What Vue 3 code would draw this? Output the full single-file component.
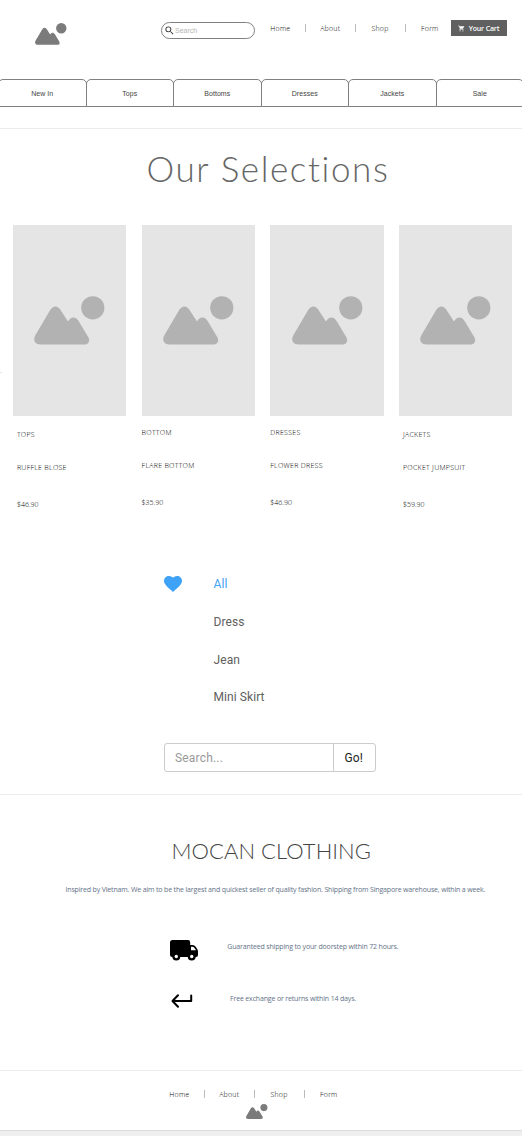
<script setup>
import { h } from 'vue'

const links = ['Home', 'About', 'Shop', 'Form']
const tabs = ['New In', 'Tops', 'Bottoms', 'Dresses', 'Jackets', 'Sale']
const products = [
  { category: 'TOPS', name: 'RUFFLE BLOSE', price: '$46.90', inset: true },
  { category: 'BOTTOM', name: 'FLARE BOTTOM', price: '$35.90', inset: false },
  { category: 'DRESSES', name: 'FLOWER DRESS', price: '$46.90', inset: false },
  { category: 'JACKETS', name: 'POCKET JUMPSUIT', price: '$59.90', inset: true },
]
const filters = ['All', 'Dress', 'Jean', 'Mini Skirt']

const Mark = () =>
  h('svg', { viewBox: '0 0 70.5 49', preserveAspectRatio: 'none', fill: 'currentColor' }, [
    h('circle', { cx: 58.8, cy: 11.8, r: 11.6 }),
    h('path', {
      d: 'M6.5 48.6C.8 48.6-1.2 44 1.2 39.6L15.6 15C18.8 8.9 24 8.9 27.2 15L34 25.4C36.8 20.4 41.6 20.2 44.6 25L54.2 41C56.6 45 54.6 48.6 50 48.6Z',
    }),
  ])
</script>

<template>
  <div class="page">
    <header class="header">
      <Mark class="logo" />
      <label class="pill">
        <svg viewBox="0 0 24 24" fill="#333"><path d="M15.5 14h-.79l-.28-.27A6.47 6.47 0 0 0 16 9.5 6.5 6.5 0 1 0 9.5 16c1.61 0 3.09-.59 4.23-1.57l.27.28v.79l5 4.99L20.49 19l-4.99-5zm-6 0a4.5 4.5 0 1 1 0-9 4.5 4.5 0 0 1 0 9z" /></svg>
        <span>Search</span>
      </label>
      <nav class="links">
        <a v-for="l in links" :key="l">{{ l }}</a>
      </nav>
      <button class="cart">
        <svg viewBox="0 0 24 24" fill="#fff"><path d="M7 18a2 2 0 1 0 0 4 2 2 0 0 0 0-4zM1 2v2h2l3.6 7.59-1.35 2.45C4.52 15.37 5.48 17 7 17h12v-2H7.42l-.03-.37.9-1.63h7.45c.75 0 1.41-.41 1.75-1.03L21.7 4H5.21l-.94-2H1zm16 16a2 2 0 1 0 0 4 2 2 0 0 0 0-4z" /></svg>
        <span>Your Cart</span>
      </button>
    </header>

    <div class="tabs">
      <div v-for="t in tabs" :key="t" class="tab">{{ t }}</div>
    </div>

    <section class="selections">
      <h1>Our Selections</h1>
      <i class="tick"></i>
      <div class="cards">
        <article v-for="p in products" :key="p.category">
          <div class="photo"><Mark class="mark" /></div>
          <div class="info" :class="{ inset: p.inset }">
            <p class="cat">{{ p.category }}</p>
            <p class="name">{{ p.name }}</p>
            <p class="price">{{ p.price }}</p>
          </div>
        </article>
      </div>
    </section>

    <section class="browse">
      <div class="filter">
        <svg class="heart" viewBox="2 3 20 18.35" preserveAspectRatio="none" fill="#3ea2f7"><path d="M12 21.35l-1.45-1.32C5.4 15.36 2 12.28 2 8.5 2 5.42 4.42 3 7.5 3c1.74 0 3.41.81 4.5 2.09C13.09 3.81 14.76 3 16.5 3 19.58 3 22 5.42 22 8.5c0 3.78-3.4 6.86-8.55 11.54L12 21.35z" /></svg>
        <ul>
          <li v-for="(f, i) in filters" :key="f" :class="{ active: i === 0 }">{{ f }}</li>
        </ul>
      </div>
      <div class="group">
        <div class="field">Search...</div>
        <div class="go">Go!</div>
      </div>
    </section>

    <section class="about">
      <h2>MOCAN CLOTHING</h2>
      <p class="intro">Inspired by Vietnam. We aim to be the largest and quickest seller of quality fashion. Shipping from Singapore warehouse, within a week.</p>
      <div class="perk">
        <svg class="truck" viewBox="0 0 28 21" fill="#000">
          <path fill-rule="evenodd" d="M2.5 0H18q2.2 0 2.2 2.2V5H22.500q2 0 3.200 1.700L27.300 9.200q.7 1.100.7 2.300V15q0 2-2 2H2.500Q0 17 0 14.500V2.500Q0 0 2.500 0ZM21 6.700V10.300H26L24.300 7.700Q23.600 6.700 22.300 6.700Z" />
          <circle cx="6.300" cy="16.500" r="4" /><circle cx="21.700" cy="16.500" r="4" />
          <circle cx="6.300" cy="16.500" r="1.700" fill="#fff" /><circle cx="21.700" cy="16.500" r="1.700" fill="#fff" />
        </svg>
        <p class="ship">Guaranteed shipping to your doorstep within 72 hours.</p>
      </div>
      <div class="perk back">
        <svg class="return" viewBox="0 0 22 14" fill="none" stroke="#000" stroke-width="2" stroke-linecap="round" stroke-linejoin="round"><path d="M20.200 1.500V7H1.800M7 1.200L1.500 7 7 12.800" /></svg>
        <p class="free">Free exchange or returns within 14 days.</p>
      </div>
    </section>

    <footer class="footer">
      <nav class="links">
        <a v-for="l in links" :key="l">{{ l }}</a>
      </nav>
      <Mark class="small" />
    </footer>
  </div>
</template>

<style>
body {
  background: #efefef;
}
</style>

<style scoped>
* {
  box-sizing: border-box;
  margin: 0;
  padding: 0;
}
svg {
  flex: none;
  overflow: visible;
}
.page {
  width: 522px;
  height: 1131px;
  overflow: hidden;
  background: #fff;
  border-bottom: 1px solid #dcdcdc;
  font-family: 'Open Sans', sans-serif;
}
.header {
  display: flex;
  align-items: flex-start;
  height: 79px;
}
.logo {
  width: 31.500px;
  height: 22px;
  margin: 22.500px 0 0 34.500px;
  color: #7b7b7b;
}
.pill {
  display: flex;
  align-items: center;
  width: 94px;
  height: 17.500px;
  margin: 21.600px 0 0 95px;
  padding-left: 2px;
  border: 1px solid #808080;
  border-radius: 9px;
  font: 7px 'Liberation Sans', sans-serif;
  color: #b5b5b5;
}
.pill svg {
  width: 11px;
  height: 11px;
}
.links {
  display: flex;
  font: 300 7px/10px 'Open Sans', sans-serif;
  letter-spacing: 0.220px;
  color: #000;
}
.header .links {
  margin-top: 24px;
  margin-left: 0.500px;
}
.links a {
  position: relative;
  width: 49.800px;
  text-align: center;
}
.links a + a::before {
  content: '';
  position: absolute;
  left: 0;
  top: 0;
  width: 1px;
  height: 8px;
  background: #bbb;
}
.cart {
  display: flex;
  align-items: center;
  width: 56.500px;
  height: 16px;
  margin: 20px 0 0 -4px;
  padding-left: 7px;
  gap: 4px;
  border: 0;
  background: #606060;
  color: #fff;
  font: 600 7px 'Open Sans', sans-serif;
  letter-spacing: -0.150px;
  white-space: nowrap;
}
.cart svg {
  width: 7px;
  height: 7px;
}
.tabs {
  display: flex;
  width: 526px;
  margin-left: -2px;
}
.tab {
  flex: none;
  width: 88.500px;
  height: 28px;
  margin-right: -1px;
  border: 1px solid #808080;
  border-radius: 5px 5px 0 0;
  text-align: center;
  font: 7px/27px 'Liberation Sans', sans-serif;
  letter-spacing: 0.050px;
  color: #444;
}
.selections {
  position: relative;
  height: 446px;
  margin-top: 21px;
  border-top: 1px solid #ececec;
}
.tick {
  position: absolute;
  left: 0;
  top: 243px;
  width: 2px;
  height: 1px;
  background: #e4e4e4;
}
h1 {
  padding-left: 146.500px;
  padding-top: 17px;
  height: 96px;
  font: 300 35px/44px Lato, sans-serif;
  letter-spacing: 1.600px;
  color: #666;
  white-space: nowrap;
}
.cards {
  display: flex;
  gap: 15.400px;
  padding-left: 12.900px;
}
article {
  flex: none;
  width: 113.300px;
}
.photo {
  height: 191px;
  padding: 71px 0 0 21.500px;
  background: #e5e5e5;
}
.mark {
  display: block;
  width: 70.500px;
  height: 49px;
  color: #b2b2b2;
}
.info {
  padding-top: 12px;
  font: 300 7px/10px 'Open Sans', sans-serif;
  letter-spacing: 0.280px;
  color: #000;
  white-space: nowrap;
}
.info.inset {
  padding-top: 14px;
  padding-left: 4px;
}
.cat {
  margin-bottom: 23px;
}
.name {
  margin-bottom: 27px;
}
.price {
  letter-spacing: 0;
}
.browse {
  height: 220px;
}
.filter {
  display: flex;
  padding-left: 164px;
  font: 12px/20px Roboto, sans-serif;
  letter-spacing: 0.080px;
  color: #606060;
}
.heart {
  width: 18px;
  height: 16px;
  margin: 2.300px 31.500px 0 0;
}
ul {
  list-style: none;
}
li {
  height: 37.800px;
}
.active {
  color: #3ea2f7;
}
.group {
  display: flex;
  width: 212px;
  height: 29px;
  margin: 17.600px 0 0 164.400px;
  border: 1px solid #ccc;
  border-radius: 3px;
  font: 12px/28px Roboto, sans-serif;
}
.field {
  width: 169px;
  padding-left: 9.500px;
  color: #999;
  letter-spacing: 0.200px;
  border-right: 1px solid #ccc;
}
.go {
  padding-left: 10px;
  letter-spacing: 0.200px;
  color: #222;
}
.about {
  height: 276px;
  padding-top: 43px;
  border-top: 1px solid #ececec;
}
h2 {
  padding-left: 171.500px;
  font: 300 22px/26px Lato, sans-serif;
  letter-spacing: 0.060px;
  color: #444;
  white-space: nowrap;
}
.intro,
.perk p {
  font: 400 7px/10px 'Open Sans', sans-serif;
  letter-spacing: -0.160px;
  color: #5f7288;
  white-space: nowrap;
}
.intro {
  padding-left: 65.500px;
  margin-top: 21px;
}
.perk {
  display: flex;
  padding-left: 170px;
  margin-top: 45px;
}
.truck {
  width: 28px;
  height: 21px;
}
.perk .ship {
  margin: 2px 0 0 29.300px;
}
.perk.back {
  margin-top: 33px;
}
.return {
  width: 22px;
  height: 14px;
  margin-left: 1px;
}
.free {
  padding-left: 37px;
}
.footer {
  height: 61px;
  padding: 19px 0 0 154.500px;
  border-top: 1px solid #ececec;
}
.small {
  display: block;
  width: 21.500px;
  height: 15px;
  margin: 4px 0 0 91.800px;
  color: #7b7b7b;
}
</style>
